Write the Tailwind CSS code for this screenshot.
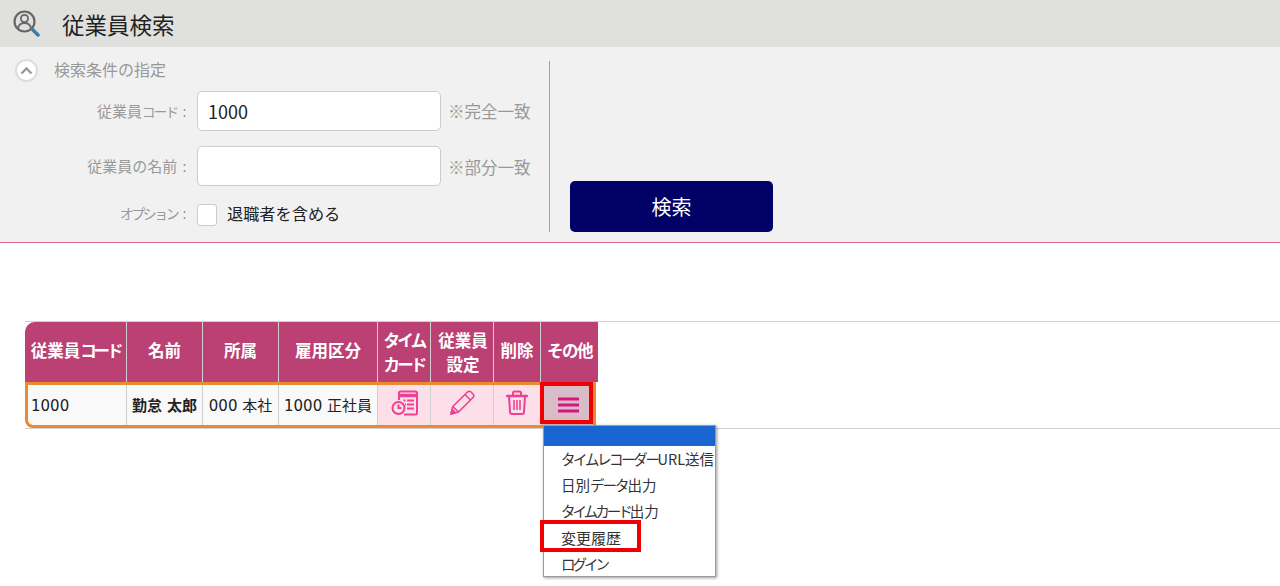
<!DOCTYPE html>
<html lang="ja">
<head>
  <meta charset="UTF-8">
  <title>従業員検索</title>
  <script src="https://cdn.jsdelivr.net/npm/@tailwindcss/browser@4"></script>
</head>
<body class="bg-white text-[#222] min-h-[586px] font-['Noto_Sans_CJK_JP','Noto_Sans',sans-serif]">

  <!-- Header -->
  <div class="h-[47px] bg-[#e0e0de] flex items-center">
    <svg class="ml-[13px] w-[27px] h-[27px]" viewBox="0 0 27 27" fill="none">
      <circle cx="11.5" cy="11.5" r="10" stroke="#666" stroke-width="2.200"/>
      <circle cx="11.5" cy="8.500" r="3.600" stroke="#666" stroke-width="1.800"/>
      <path d="M5 18c1-4 3.500-5 6.500-5s5.500 1 6.500 5" stroke="#666" stroke-width="1.800"/>
      <path d="M19 19l6 6" stroke="#3b7ea8" stroke-width="3.500" stroke-linecap="round"/>
    </svg>
    <h1 class="ml-[22px] text-[22.500px] leading-none text-[#222] translate-y-[1px]">従業員検索</h1>
  </div>

  <!-- Search conditions -->
  <div class="h-[196px] bg-[#f1f1f1] border-b border-[#dd6a94] pt-[14px] flex items-start">
    <div class="w-[550px] h-[171px] border-r border-[#a0a0a0]">
      <div class="flex items-center h-[20px] pl-[15px] -translate-y-[1px]">
        <span class="w-[23px] h-[23px] rounded-full bg-white border-2 border-[#ddd] flex items-center justify-center">
          <svg class="w-[13px] h-[9px]" viewBox="0 0 13 9" fill="none"><path d="M1.500 7.500L6.500 2.500l5 5" stroke="#999" stroke-width="2.400"/></svg>
        </span>
        <span class="ml-[16px] text-[16px] leading-none text-[#999] -translate-y-[1px]">検索条件の指定</span>
      </div>
      <div class="mt-[10px] flex items-center h-[40px]">
        <label class="w-[187px] text-right text-[15px] text-[#999] whitespace-nowrap translate-y-[1px]">従業員<span class="text-[13.500px] tracking-[-1.800px]">コード</span><span class="font-['DejaVu_Sans']"> :</span></label>
        <input type="text" value="1000" class="ml-[10px] w-[244px] h-[40px] bg-white border border-[#ccc] rounded-[5px] px-[10px] text-[18px] text-[#222]">
        <span class="ml-[7px] text-[16.500px] text-[#999] whitespace-nowrap">※完全一致</span>
      </div>
      <div class="mt-[15px] flex items-center h-[40px]">
        <label class="w-[187px] text-right text-[15px] text-[#999] whitespace-nowrap translate-y-[1px]">従業員の名前<span class="font-['DejaVu_Sans']"> :</span></label>
        <input type="text" class="ml-[10px] w-[244px] h-[40px] bg-white border border-[#ccc] rounded-[5px] px-[11px] text-[18px]">
        <span class="ml-[7px] text-[16.500px] text-[#999] whitespace-nowrap translate-y-[1px]">※部分一致</span>
      </div>
      <div class="mt-[18px] flex items-center h-[22px]">
        <label class="w-[187px] text-right text-[15px] text-[#999] whitespace-nowrap -translate-y-[1px]"><span class="text-[14px] tracking-[-2.500px]">オプション</span><span class="font-['DejaVu_Sans']"> :</span></label>
        <span class="ml-[10px] w-[20px] h-[22px] bg-white border border-[#ccc] rounded-[3px]"></span>
        <span class="ml-[10px] text-[16.200px] text-[#222] -translate-y-[2px]">退職者を含める</span>
      </div>
    </div>
    <div class="h-[171px] pl-[20px] flex items-end">
      <button class="w-[203px] h-[51px] bg-[#000066] rounded-[5px] text-white text-[20px]">検索</button>
    </div>
  </div>

  <!-- Result table -->
  <div class="relative ml-[25px] mt-[78px] border-y border-[#d0d0d0] h-[108px] font-['DejaVu_Sans','Noto_Sans_CJK_JP',sans-serif]">
    <div class="w-[573px] grid grid-cols-[101px_75px_75px_98px_52px_62px_46px_57px] gap-x-px grid-rows-[60px_46px] bg-[#cfcfcf] rounded-tl-[10px] rounded-bl-[10px] overflow-hidden">
      <div class="bg-[#bb4073] text-white font-bold text-[16.500px] leading-[24px] flex items-center justify-center text-center whitespace-nowrap">従業員<span class="tracking-[-3.200px]">コード</span></div>
      <div class="bg-[#bb4073] text-white font-bold text-[16.500px] leading-[24px] flex items-center justify-center text-center">名前</div>
      <div class="bg-[#bb4073] text-white font-bold text-[16.500px] leading-[24px] flex items-center justify-center text-center">所属</div>
      <div class="bg-[#bb4073] text-white font-bold text-[16.500px] leading-[24px] flex items-center justify-center text-center">雇用区分</div>
      <div class="bg-[#bb4073] text-white font-bold text-[16.500px] leading-[24px] text-center pt-[8px] tracking-[-2.800px]">タイム<br>カード</div>
      <div class="bg-[#bb4073] text-white font-bold text-[16.500px] leading-[24px] flex items-center justify-center text-center pt-[3px] pl-[2px]">従業員<br>設定</div>
      <div class="bg-[#bb4073] text-white font-bold text-[16.500px] leading-[24px] flex items-center justify-center text-center">削除</div>
      <div class="bg-[#bb4073] text-white font-bold text-[16.500px] leading-[24px] flex items-center justify-center text-center tracking-[-1.500px]">その他</div>

      <div class="bg-[#f9f9f9] text-[15px] flex items-center pl-[6px] pt-[3px]">1000</div>
      <div class="bg-[#f9f9f9] text-[15px] font-bold flex items-center justify-center whitespace-nowrap pt-[3px]">勤怠 太郎</div>
      <div class="bg-[#f9f9f9] text-[15px] flex items-center justify-center whitespace-nowrap pt-[3px]">000 本社</div>
      <div class="bg-[#f9f9f9] text-[15px] flex items-center justify-center whitespace-nowrap pt-[3px]">1000 正社員</div>
      <div class="bg-[#fddfea] flex items-center justify-center">
        <svg class="w-[27px] h-[27px] -translate-y-[2px]" viewBox="0 0 27 27" fill="none" stroke="#ee4192" stroke-width="2">
          <path d="M8 10V3c0-1 .500-1.500 1.500-1.500h15c1 0 1.500 .500 1.500 1.500v20c0 1-.500 1.500-1.500 1.500H13"/>
          <path d="M9 5.500h16" stroke-width="3.400"/>
          <path d="M16 10.500h7M16 14.500h7M16 18.500h7M12.500 10.500h2M14 14.500h1" stroke-width="2"/>
          <circle cx="7.500" cy="18" r="6" fill="#fddfea"/>
          <path d="M7.500 14.500V18h3"/>
        </svg>
      </div>
      <div class="bg-[#fddfea] flex items-center justify-center">
        <svg class="w-[26px] h-[26px] -translate-y-[2px]" viewBox="0 0 26 26" fill="none" stroke="#ee4192" stroke-width="1.600" stroke-linejoin="round">
          <path d="M2 24l1.800-7.500L18.500 2c1-1 2.500-1 3.500 0l2 2c1 1 1 2.500 0 3.500L9.500 22z"/>
          <path d="M3.800 16.500l5.700 5.500M16 4.500l5.500 5.500"/>
          <path d="M2 24l1.200-4.500 3.300 3.300z" fill="#ee4192"/>
        </svg>
      </div>
      <div class="bg-[#fddfea] flex items-center justify-center">
        <svg class="w-[22px] h-[25px] -translate-y-[3px]" viewBox="0 0 22 25" fill="none" stroke="#ee4192" stroke-width="2">
          <path d="M1 6h20" stroke-width="2.400" stroke-linecap="round"/>
          <path d="M7 5.500V3c0-1 .500-1.500 1.500-1.500h5c1 0 1.500 .500 1.500 1.500v2.500"/>
          <path d="M3 6l1 16c0 1 1 2 2 2h10c1 0 2-1 2-2l1-16"/>
          <path d="M8 10v10M11 10v10M14 10v10" stroke-width="1.600"/>
        </svg>
      </div>
      <div class="bg-[#d8bcc8] flex items-center justify-center border-r-[2px] border-white">
        <svg class="w-[21px] h-[16px]" viewBox="0 0 21 16" stroke="#d6167e" stroke-width="2.800">
          <path d="M0 2h21M0 8h21M0 14h21"/>
        </svg>
      </div>
    </div>

    <!-- Selected row outline -->
    <div class="absolute left-0 top-[60px] w-[571px] h-[46px] border-[3px] border-[#e98b30] rounded-bl-[8px] pointer-events-none"></div>
    <!-- Red callout on その他 -->
    <div class="absolute left-[515px] top-[60px] w-[53px] h-[42px] border-[4px] border-[#f00000] pointer-events-none"></div>

    <!-- Dropdown menu -->
    <div class="absolute left-[518px] top-[103px] w-[173px] h-[152px] bg-white border border-[#9a9a9a] shadow-[1px_1px_3px_rgba(0,0,0,0.4)] text-[14.500px] text-[#333]">
      <div class="h-[20px] bg-[#1a66d0]"></div>
      <ul class="pl-[17px] whitespace-nowrap font-['Noto_Sans_CJK_JP',sans-serif]">
        <li class="h-[26px] leading-[26px]"><span class="tracking-[-2.400px]">タイムレコーダー</span>URL送信</li>
        <li class="h-[26px] leading-[26px]">日別<span class="tracking-[-2px]">データ</span>出力</li>
        <li class="h-[26px] leading-[26px]"><span class="tracking-[-3px]">タイムカード</span>出力</li>
        <li class="h-[26px] leading-[26px] text-[15px] translate-y-[1px]">変更履歴</li>
        <li class="h-[26px] leading-[26px] tracking-[-3px] translate-y-[1px]">ログイン</li>
      </ul>
    </div>
    <!-- Red callout on 変更履歴 -->
    <div class="absolute left-[515px] top-[198px] w-[101px] h-[32px] border-[4px] border-[#f00000] pointer-events-none"></div>
  </div>
</body>
</html>
